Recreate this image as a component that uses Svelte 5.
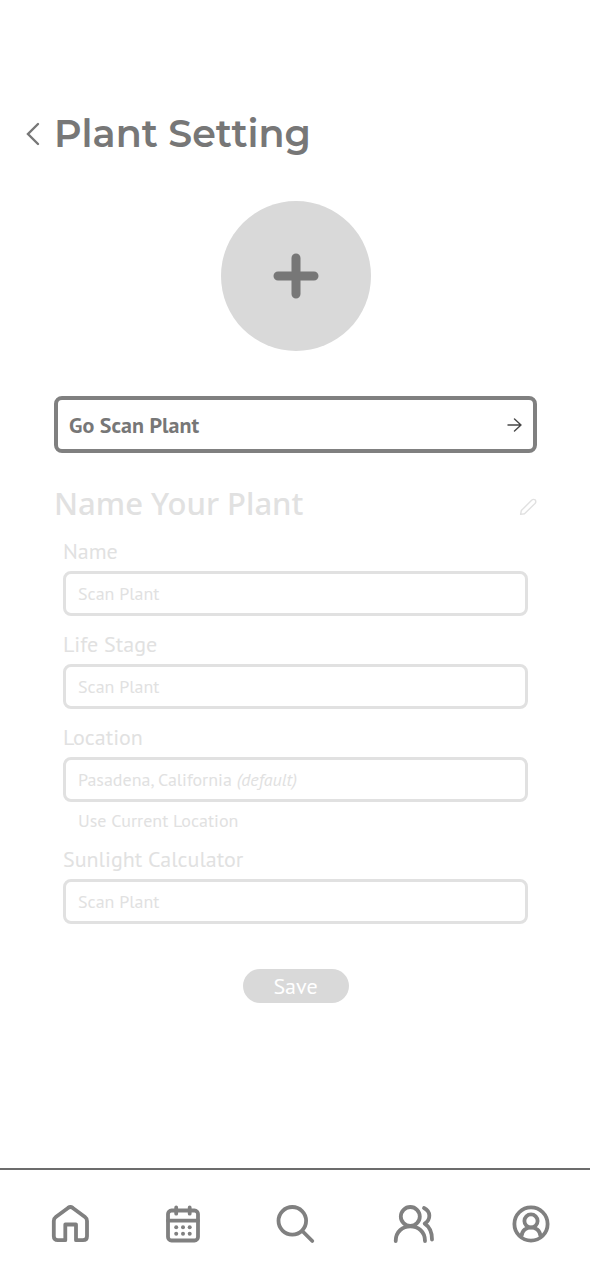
<script>
	let name = $state('');
	let stage = $state('');
	let location = $state('');
	let sunlight = $state('');
</script>

<div class="page">
	<header class="header">
		<button type="button" class="back" aria-label="Back">
			<svg width="14" height="24" viewBox="0 0 14 24" fill="none">
				<path d="M12 2L2 12L12 22" stroke="currentColor" stroke-width="2.4" stroke-linecap="round" />
			</svg>
		</button>
		<h1>Plant Setting</h1>
	</header>

	<main class="content">
		<button type="button" class="photo" aria-label="Add a photo">
			<svg width="46" height="46" viewBox="0 0 46 46" fill="none">
				<path d="M23 5V41M5 23H41" stroke="currentColor" stroke-width="9" stroke-linecap="round" />
			</svg>
		</button>

		<button type="button" class="scan">
			<span>Go Scan Plant</span>
			<svg width="15" height="16" viewBox="0 0 15 16" fill="none">
				<path d="M1 8H14M7.5 2L14 8L7.5 14" stroke="#484848" stroke-width="1.4" stroke-linecap="round" stroke-linejoin="round" />
			</svg>
		</button>

		<div class="subheader">
			<h2>Name Your Plant</h2>
			<button type="button" class="edit" aria-label="Edit">
				<svg width="18" height="18" viewBox="0 0 18 18" fill="none">
					<path d="M1.6 16.4L2.3 12.6L12.6 2.2Q14.3 .7 16.2 1.9Q17.5 3.8 16 5.5L5.5 15.8Z" stroke="currentColor" stroke-width="1.4" stroke-linejoin="round" />
				</svg>
			</button>
		</div>

		<form class="form">
			<label for="name">Name</label>
			<div class="box"><input id="name" type="text" placeholder="Scan Plant" bind:value={name} /></div>

			<label for="stage">Life Stage</label>
			<div class="box"><input id="stage" type="text" placeholder="Scan Plant" bind:value={stage} /></div>

			<label for="location">Location</label>
			<div class="box">
				<input id="location" class="fit" type="text" placeholder="Pasadena, California" bind:value={location} />
				{#if !location}<em>(default)</em>{/if}
			</div>
			<button type="button" class="current">Use Current Location</button>

			<label for="sunlight">Sunlight Calculator</label>
			<div class="box"><input id="sunlight" type="text" placeholder="Scan Plant" bind:value={sunlight} /></div>

			<button type="button" class="save">Save</button>
		</form>
	</main>

	<nav class="nav">
		<a href="#home" aria-label="Home">
			<svg width="38" height="40" viewBox="0 0 38 40">
				<path d="M14.3 36.2H6.8Q2.8 36.2 2.8 32.2V17Q2.8 14.5 4.8 13L17 3.9Q19.4 2.2 21.8 3.9L34 13Q36 14.5 36 17V32.2Q36 36.2 32 36.2H25V20.5H14.3Z" />
			</svg>
		</a>
		<a href="#calendar" aria-label="Calendar">
			<svg width="34" height="40" viewBox="0 0 34 40">
				<rect x="2" y="6.5" width="30" height="30" rx="3.5" />
				<path d="M2 16.7H32M10.2 3.5V9.7M23.7 3.5V9.7" />
				<g class="dots">
					<circle cx="10.2" cy="23.3" r="2" />
					<circle cx="17" cy="23.3" r="2" />
					<circle cx="23.7" cy="23.3" r="2" />
					<circle cx="10.2" cy="29.7" r="2" />
					<circle cx="17" cy="29.7" r="2" />
					<circle cx="23.7" cy="29.7" r="2" />
				</g>
			</svg>
		</a>
		<a href="#search" aria-label="Search">
			<svg width="38" height="40" viewBox="0 0 38 40">
				<circle cx="16.3" cy="16.8" r="13.8" />
				<path d="M26.3 27L36.3 37" />
			</svg>
		</a>
		<a href="#friends" aria-label="Friends">
			<svg width="44" height="40" viewBox="-3 0 44 40">
				<circle cx="16.3" cy="12.5" r="9.5" />
				<path d="M1.7 37C1.7 17.5 31 17.5 31 37M30 4C37 7.5 37 15.5 30.7 19.7C35 22.500 38 28 38 35.500" />
			</svg>
		</a>
		<a href="#profile" aria-label="Profile">
			<svg width="38" height="40" viewBox="0 0 38 40">
				<circle cx="20" cy="20" r="16.6" />
				<circle cx="20" cy="17" r="6.6" />
				<path d="M10.5 32C11.5 20.5 28.5 20.5 29.5 32" />
			</svg>
		</a>
	</nav>
</div>

<style>
	:global(body) {
		margin: 0;
		background: #fff;
	}

	.page {
		display: flex;
		flex-direction: column;
		min-height: 100vh;
		font-family: 'PT Sans', 'Noto Sans', sans-serif;
		color: #777;
	}

	button {
		padding: 0;
		border: none;
		background: none;
		font: inherit;
		color: inherit;
		cursor: pointer;
	}

	svg {
		display: block;
		overflow: visible;
	}

	.header {
		display: flex;
		align-items: center;
		gap: 14px;
		padding: 110px 26px 0;
	}

	h1 {
		margin: 0;
		font-family: Montserrat, Inter, sans-serif;
		font-size: 38px;
		line-height: 48px;
		font-weight: 600;
	}

	.content {
		display: flex;
		flex-direction: column;
		padding: 43px 53px 40px 54px;
	}

	.photo {
		display: flex;
		align-items: center;
		justify-content: center;
		align-self: center;
		width: 150px;
		height: 150px;
		border-radius: 50%;
		background: #d9d9d9;
	}

	.scan {
		display: flex;
		align-items: center;
		justify-content: space-between;
		margin-top: 45px;
		padding: 0 11px;
		height: 57px;
		border: 4px solid #808080;
		border-radius: 8px;
		font-size: 22px;
		font-weight: 700;
	}

	.subheader {
		display: flex;
		align-items: center;
		justify-content: space-between;
		margin-top: 30px;
		color: #e1e1e1;
	}

	h2 {
		margin: 0;
		font-family: 'Noto Sans', sans-serif;
		font-size: 31px;
		line-height: 40px;
		font-weight: 500;
	}

	.edit {
		padding-top: 8px;
	}

	.form {
		display: flex;
		flex-direction: column;
		padding: 0 9px;
		color: #e1e1e1;
	}

	label {
		margin: 12px 0 4px;
		font-size: 22px;
		line-height: 32px;
	}

	.box {
		display: flex;
		align-items: center;
		gap: 5px;
		box-sizing: border-box;
		height: 45px;
		padding: 0 12px;
		border: 3px solid #e1e1e1;
		border-radius: 8px;
		font-size: 18px;
	}

	input {
		width: 100%;
		padding: 0;
		border: none;
		outline: none;
		background: none;
		font: inherit;
		color: #777;
	}

	input::placeholder {
		color: #e1e1e1;
		opacity: 1;
	}

	.fit {
		width: auto;
		field-sizing: content;
	}

	.current {
		align-self: flex-start;
		margin: 8px 0 0 15px;
		font-size: 18px;
		line-height: 21px;
	}

	.save {
		align-self: center;
		margin-top: 45px;
		width: 106px;
		height: 34px;
		border-radius: 17px;
		background: #d9d9d9;
		font-size: 22px;
		line-height: 34px;
		color: #fff;
	}

	.nav {
		display: flex;
		align-items: center;
		justify-content: space-between;
		box-sizing: border-box;
		height: 110px;
		margin-top: auto;
		padding: 0 41px 0 51px;
		border-top: 2px solid #6c6c6c;
	}

	.nav a {
		color: #808080;
	}

	.nav svg {
		fill: none;
		stroke: currentColor;
		stroke-width: 3.8;
		stroke-linecap: round;
		stroke-linejoin: round;
	}

	.nav .dots {
		fill: currentColor;
		stroke: none;
	}
</style>
